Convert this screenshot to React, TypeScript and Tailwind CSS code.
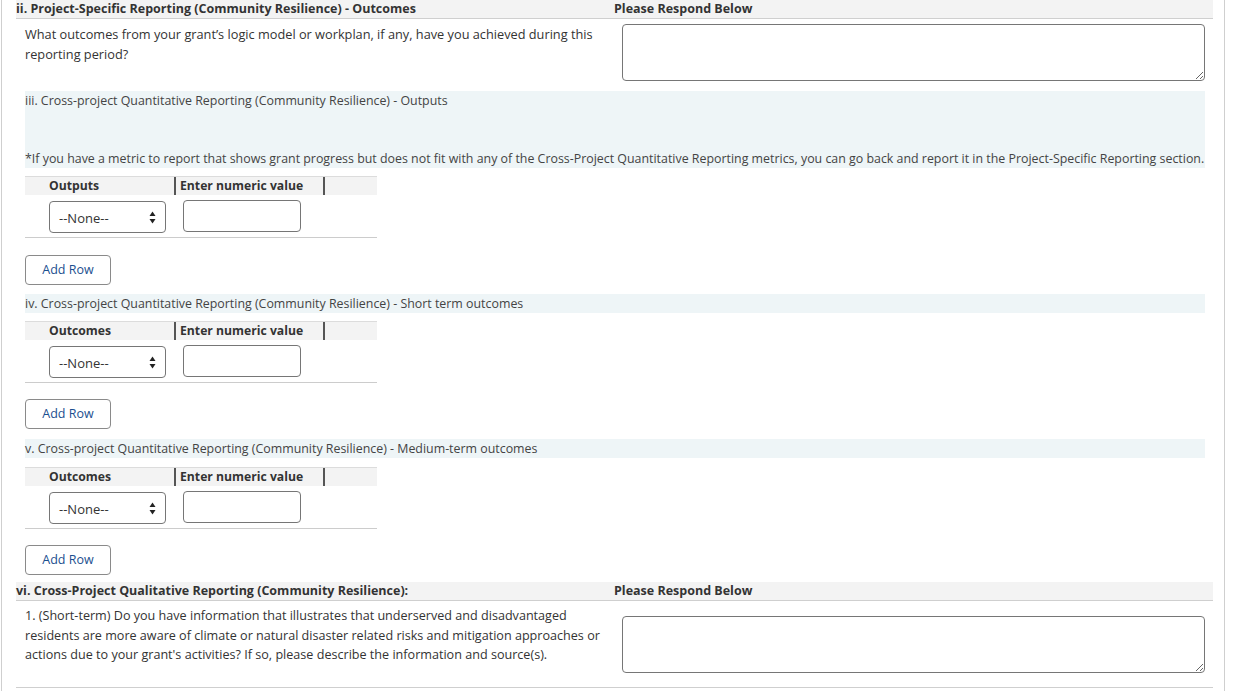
import React from "react";

const font = { fontFamily: '"Open Sans", "Noto Sans", sans-serif' };

function Arrows() {
  return (
    <svg width="7" height="13" viewBox="0 0 7 13" className="absolute right-[9px] top-[9px]">
      <path d="M3.5 0.5 L6.5 5 L0.5 5 Z" fill="#222" />
      <path d="M3.5 12.5 L6.5 8 L0.5 8 Z" fill="#222" />
    </svg>
  );
}

function QuantTable({ label }: { label: string }) {
  return (
    <div className="w-[352px]">
      <div className="flex h-[19px] items-stretch border-t border-[#dcdcdc] bg-[#f3f3f3] text-[12.2px] font-bold text-[#333]">
        <div className="w-[149px] pl-[24px] leading-[18px]">{label}</div>
        <div className="w-[151px] border-x-2 border-[#555] pl-[4px] leading-[18px]">Enter numeric value</div>
      </div>
      <div className="flex h-[43px] items-start gap-[17px] border-b border-[#ccc] pl-[24px] pt-[5px]">
        <div className="relative mt-[1px] h-[32px] w-[117px] rounded-[4px] border border-[#767676] bg-white">
          <span className="absolute left-[9px] top-[7px] text-[13px] text-[#333]">--None--</span>
          <Arrows />
        </div>
        <div className="h-[32px] w-[118px] rounded-[4px] border border-[#767676] bg-white" />
      </div>
    </div>
  );
}

function AddRow() {
  return (
    <div className="flex h-[30px] w-[86px] items-center justify-center rounded-[4px] border border-[#8a8a8a] bg-white text-[12.5px] text-[#1b4f8f]">
      Add Row
    </div>
  );
}

function Band({ children }: { children: React.ReactNode }) {
  return (
    <div className="h-[19px] bg-[#eef5f7] text-[12.4px] leading-[19px] text-[#444]">{children}</div>
  );
}

export default function App() {
  return (
    <div className="min-h-[691px] w-[1233px] bg-white" style={font}>
      <div className="ml-[1px] flex min-h-[691px] w-[1224px] flex-col border-x border-[#cfcfcf] pl-[14px] pr-[11px]">
        {/* ii header */}
        <div className="flex h-[19px] border-b border-[#cfcfcf] bg-[#f3f3f3] text-[12.5px] font-bold leading-[18px] text-[#333]">
          <div className="w-[590px]">ii. Project-Specific Reporting (Community Resilience) - Outcomes</div>
          <div className="pl-[8px]">Please Respond Below</div>
        </div>
        <div className="flex h-[72px]">
          <div className="w-[590px] pl-[9px] pr-[4px] pt-[5px] text-[12.75px] leading-[20px] text-[#333]">
            What outcomes from your grant’s logic model or workplan, if any, have you achieved during this reporting period?
          </div>
          <div className="flex-1 pl-[16px] pr-[8px] pt-[5px]">
            <textarea className="block h-[57px] w-full rounded-[4px] border border-[#767676] bg-white" />
          </div>
        </div>

        <div className="flex flex-col pl-[9px] pr-[8px]">
          {/* iii */}
          <div className="h-[77px] bg-[#eef5f7] text-[12.4px] text-[#444]">
            <div className="pt-[1px] leading-[18px]">iii. Cross-project Quantitative Reporting (Community Resilience) - Outputs</div>
            <div className="mt-[40px] whitespace-nowrap text-[12.4px] leading-[18px]">
              *If you have a metric to report that shows grant progress but does not fit with any of the Cross-Project Quantitative Reporting metrics, you can go back and report it in the Project-Specific Reporting section.
            </div>
          </div>
          <div className="mt-[8px]">
            <QuantTable label="Outputs" />
          </div>
          <div className="mt-[17px]">
            <AddRow />
          </div>

          {/* iv */}
          <div className="mt-[9px]">
            <Band>iv. Cross-project Quantitative Reporting (Community Resilience) - Short term outcomes</Band>
          </div>
          <div className="mt-[8px]">
            <QuantTable label="Outcomes" />
          </div>
          <div className="mt-[16px]">
            <AddRow />
          </div>

          {/* v */}
          <div className="mt-[10px]">
            <Band>v. Cross-project Quantitative Reporting (Community Resilience) - Medium-term outcomes</Band>
          </div>
          <div className="mt-[9px]">
            <QuantTable label="Outcomes" />
          </div>
          <div className="mt-[16px]">
            <AddRow />
          </div>
        </div>

        {/* vi header */}
        <div className="mt-[7px] flex h-[19px] border-b border-[#cfcfcf] bg-[#f3f3f3] text-[12.5px] font-bold leading-[18px] text-[#333]">
          <div className="w-[590px]">vi. Cross-Project Qualitative Reporting (Community Resilience):</div>
          <div className="pl-[8px]">Please Respond Below</div>
        </div>
        <div className="flex h-[87px] border-b border-[#cfcfcf]">
          <div className="w-[590px] pl-[9px] pr-0 pt-[5px] text-[12.6px] leading-[19.5px] text-[#333]">
            1. (Short-term) Do you have information that illustrates that underserved and disadvantaged residents are more aware of climate or natural disaster related risks and mitigation approaches or actions due to your grant's activities? If so, please describe the information and source(s).
          </div>
          <div className="flex-1 pl-[16px] pr-[8px] pt-[15px]">
            <textarea className="block h-[57px] w-full rounded-[4px] border border-[#767676] bg-white" />
          </div>
        </div>
      </div>
    </div>
  );
}
